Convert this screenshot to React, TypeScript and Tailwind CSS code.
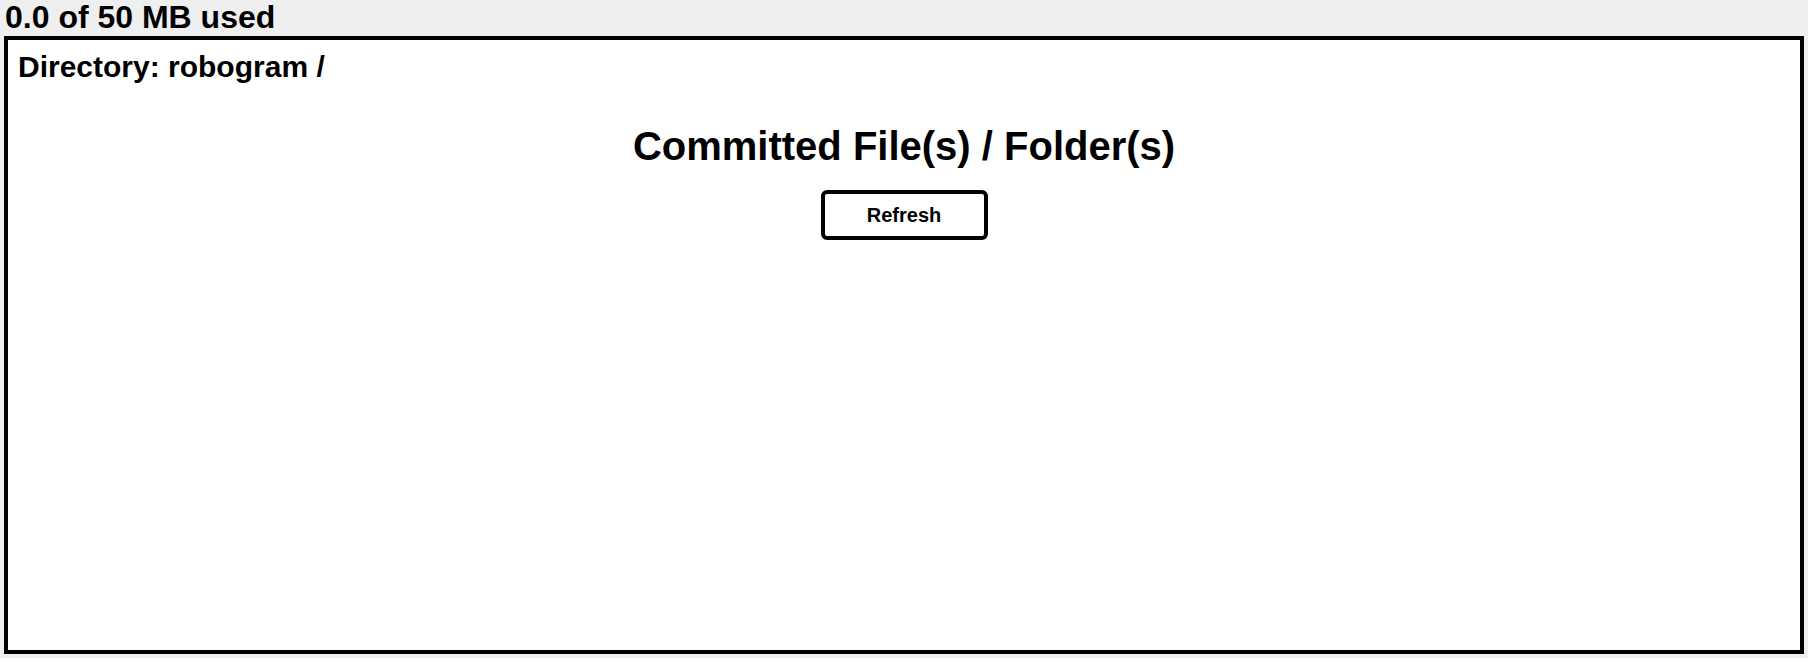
export default function App() {
  return (
    <div className="flex h-[658px] flex-col bg-[#efefef] px-1 pb-1 font-['Liberation_Sans',Arial,sans-serif] text-black">
      <div className="h-[36px] pl-px text-[32px] font-bold leading-[34px]">0.0 of 50 MB used</div>
      <div className="flex flex-1 flex-col border-4 border-black bg-white">
        <div className="pl-[10px] pt-[9px] text-[30px] font-bold leading-[36px]">Directory: robogram /</div>
        <h1 className="mt-[37px] text-center text-[40px] font-bold leading-[48px]">Committed File(s) / Folder(s)</h1>
        <div className="mt-[20px] flex justify-center">
          <button
            type="button"
            className="h-[50px] w-[167px] rounded-[6px] border-4 border-black bg-white text-[20px] font-bold"
          >
            Refresh
          </button>
        </div>
      </div>
    </div>
  );
}
